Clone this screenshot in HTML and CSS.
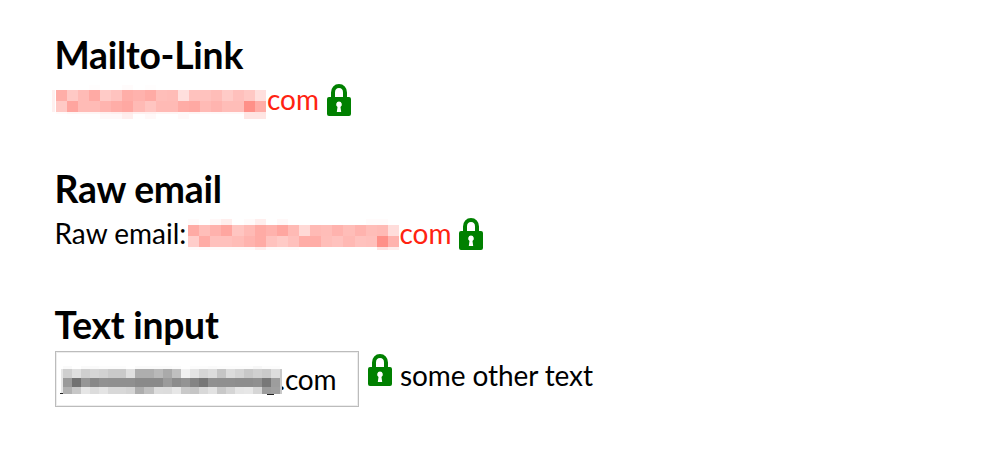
FILE: index.html
```html
<!DOCTYPE html>
<html lang="en">
<head>
<meta charset="utf-8">
<title>Email encryption</title>
<link rel="stylesheet" href="styles.css">
</head>
<body>
<svg class="defs" aria-hidden="true">
  <symbol id="lock" viewBox="0 0 24 32">
    <path fill="none" stroke="currentColor" stroke-width="4" d="M6 14V8.500C6 4.500 8.500 2 12 2S18 4.500 18 8.500V14"/>
    <path fill="currentColor" fill-rule="evenodd" d="M2 13H22Q24 13 24 15V30Q24 32 22 32H2Q0 32 0 30V15Q0 13 2 13ZM12 17.500A3 3 0 0 0 10.500 23L9.800 28H14.200L13.500 23A3 3 0 0 0 12 17.500Z"/>
  </symbol>
</svg>
<main class="page">
  <section class="block">
    <h2 class="title">Mailto-Link</h2>
    <div class="line">
      <a class="mail"><svg class="mosaic red" width="214" height="36" data-mosaic="mailto"></svg><span>com</span></a>
      <svg class="lock"><use href="#lock"/></svg>
    </div>
  </section>
  <section class="block">
    <h2 class="title">Raw email</h2>
    <div class="line raw">
      <span class="label">Raw email:</span>
      <a class="mail"><svg class="mosaic" width="211" height="36" data-mosaic="raw"></svg><span>com</span></a>
      <svg class="lock"><use href="#lock"/></svg>
    </div>
  </section>
  <section class="block">
    <h2 class="title">Text input</h2>
    <div class="line form">
      <div class="input"><svg class="mosaic grey" width="223" height="36" data-mosaic="input"></svg><span class="domain">.com</span></div>
      <svg class="lock"><use href="#lock"/></svg>
      <span class="after">some other text</span>
    </div>
  </section>
</main>
<script src="mosaic.js"></script>
</body>
</html>
```
FILE: styles.css
```css
body {
  margin: 0;
  background: #fff;
  color: #000;
  font-family: Lato, sans-serif;
  font-size: 28px;
}
.defs { position: absolute; width: 0; height: 0; }
.page { padding: 32px 0 0 55px; }
.block { height: 134px; }
.block + .block { height: 136px; }
.title {
  margin: 0 0 0 -.5px;
  height: 46px;
  font-size: 37.300px;
  line-height: 46px;
  font-weight: 700;
  letter-spacing: -.25px;
  white-space: nowrap;
}
.line { display: flex; height: 44px; line-height: 42px; white-space: nowrap; }
.mail { display: flex; color: #ff2311; }
.mail span { margin-left: 1px; }
.mosaic { position: relative; display: block; flex: none; margin-top: 5px; shape-rendering: crispEdges; overflow: visible; }
.red { margin-left: -3px; }
.lock { width: 24px; height: 32px; margin: 6px 0 0 8px; color: #008000; flex: none; }
.label { width: 133.500px; margin-left: -.5px; }
.raw .mail span { margin-left: .5px; }
.raw .lock { margin-left: 7.500px; }
.form { height: 60px; }
.input {
  box-sizing: border-box;
  display: flex;
  width: 304px;
  height: 56px;
  margin-top: 3px;
  padding-left: 5px;
  border: 1px solid #bcbcbc;
  box-shadow: inset 0 0 0 1px #ededed;
  line-height: 55px;
}
.grey { margin-top: 7px; }
.domain { margin-left: -5.500px; letter-spacing: -.2px; }
.form .lock { margin: 6px 0 0 9px; }
.after { margin-left: 8px; line-height: 54px; letter-spacing: -.1px; }
```
FILE: mosaic.js
```js
// Each mosaic: cell origin and width, then bands of [top, bottom, colours].
// Coloured bands hold the green channel; grey bands hold one level.
const mosaics = {
  mailto: {
    x: 4, step: 11.07, red: true, edge: [0, 7, 29, 3, 'f0'],
    bands: [
      [2, 7, 'ff ff ff fd ff ff fb ff fd ff ff ff ff ff ff ff ff ff ff'],
      [7, 18, 'ae c9 bb aa cb c3 ae b2 ab be bc df c2 c2 bd cb c0 c8 df'],
      [18, 29, 'c9 a5 bb bb b4 ad a8 ba c5 ba ba ac a9 ba b4 bd bd 90 ad'],
      [29, 31, 'fa f5 f5 f5 f0 ee e9 f0 f0 f5 f5 f8 f5 f8 f8 f8 f8 e5 e3'],
      [31, 36, 'ff fe fe fe f8 f8 ee fe f8 ff ff f9 ff ff ff ff ff e5 e5']
    ]
  },
  raw: {
    x: 0, step: 11.1, red: true,
    bands: [
      [2, 8, 'fa ff f8 ee ff fa ee ff f8 ff ff ff ff ff ff ff fb fb ff'],
      [8, 19, 'ab be b2 a6 c5 ba ab b2 a6 ba d9 ba bd b3 bd b3 bd ba dd'],
      [19, 30, 'cd ab c0 c0 bc b3 ab c2 ca c0 ad ad be c2 b9 c2 c0 90 b3'],
      [30, 33, 'fa fa fa fa fa fa ee fa fa fa ff ff ff ff ff ff ff e2 ee']
    ]
  },
  input: {
    x: 2, step: 9.05, red: false, edge: [0, 10, 35, 2, 'e5'],
    bands: [
      [7, 10, 'fa ff fa fa fc fc fc ff fa fa fa fa fc ff fc fc fa fc fc fc fc f7 fc fc'],
      [10, 19, 'cf df cf d6 d2 ca ca e0 ae ae b9 aa c0 f2 e4 d5 dc c5 dc d4 c8 d0 ca dd'],
      [19, 28, '9a 72 96 88 91 90 90 90 8a 8a 8a 9b 8c 94 84 76 90 8f 8f 8d 8d 90 78 9d'],
      [28, 35, 'b1 c7 e6 dc e4 d8 d8 d4 ad c0 dd dc e7 c9 c5 d8 e2 c8 d5 e5 e7 d6 9c a0']
    ]
  }
};

const NS = 'http://www.w3.org/2000/svg';

function addRect(svg, x, y, width, height, fill) {
  const rect = document.createElementNS(NS, 'rect');
  Object.entries({ x, y, width, height, fill }).forEach(([k, v]) => rect.setAttribute(k, v));
  svg.appendChild(rect);
}

document.querySelectorAll('[data-mosaic]').forEach(svg => {
  const { x, step, red, edge, bands } = mosaics[svg.dataset.mosaic];
  const color = hex => {
    const v = parseInt(hex, 16);
    return red ? `rgb(255,${v},${Math.round(v - (255 - v) * 0.07)})` : `rgb(${v},${v},${v})`;
  };
  if (edge) {
    const [left, top, bottom, width, v] = edge;
    addRect(svg, left, top, width, bottom - top, color(v));
  }
  bands.forEach(([top, bottom, values]) => {
    values.split(' ').forEach((v, i) => {
      const left = Math.round(x + i * step);
      const right = Math.round(x + (i + 1) * step);
      addRect(svg, left, top, right - left, bottom - top, color(v));
    });
  });
  if (!red) {
    addRect(svg, -1, 34, 3, 1, '#222');
    addRect(svg, 206, 35, 7, 1, '#222');
    addRect(svg, 219, 10, 2, 25, '#c8c8c8');
  }
});
```
